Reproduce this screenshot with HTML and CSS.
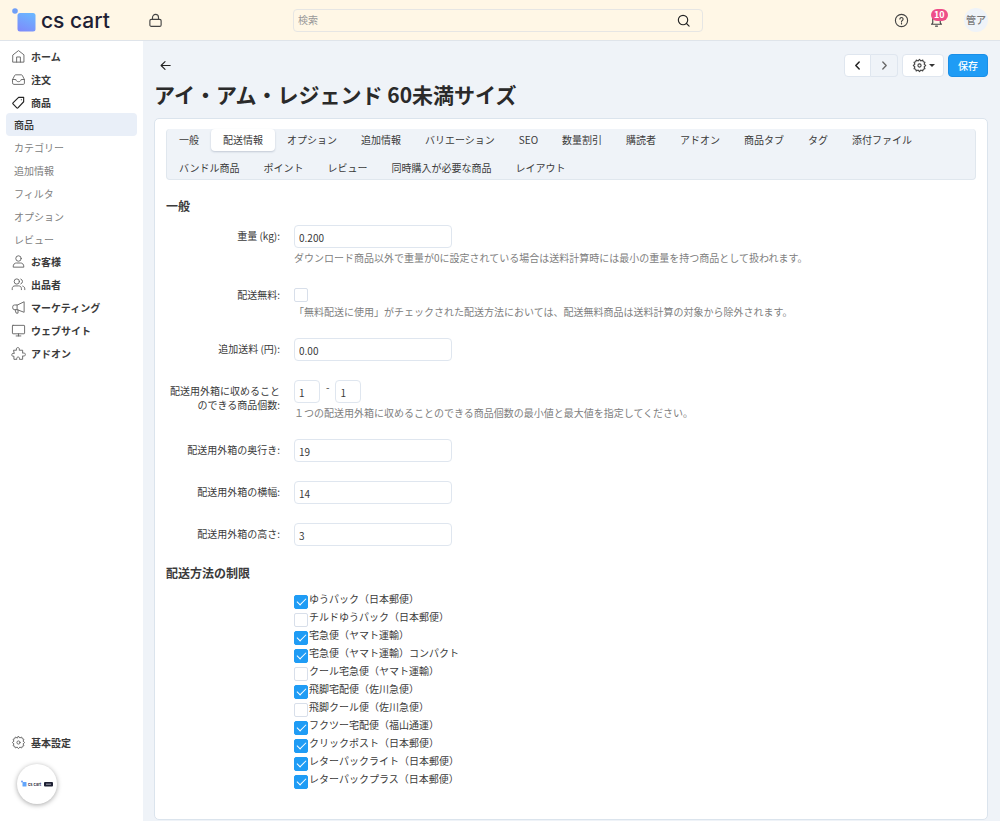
FILE: index.html
```html
<!DOCTYPE html>
<html lang="ja">
<head>
<meta charset="utf-8">
<meta name="viewport" content="width=device-width, initial-scale=1">
<title>アイ・アム・レジェンド 60未満サイズ</title>
<link rel="stylesheet" href="styles.css">
</head>
<body>
<header class="topbar">
  <a class="brand" href="#" aria-label="cs cart">
    <svg class="brand-mark" viewBox="0 0 24 24" aria-hidden="true">
      <defs><linearGradient id="mark" x1="0.7" y1="0" x2="0.3" y2="1"><stop offset="0" stop-color="#6cb6ff"/><stop offset="1" stop-color="#7d8cfb"/></linearGradient></defs>
      <circle cx="3" cy="3" r="2.8" fill="#6f9ff8"/>
      <rect x="5.500" y="5" width="18" height="18.500" rx="2.500" fill="url(#mark)"/>
    </svg>
    <span class="brand-name">cs cart</span>
  </a>
  <button class="icon-button lock" type="button" aria-label="ロック">
    <svg class="icon" viewBox="0 0 16 16"><rect x="2" y="6.800" width="12" height="7.400" rx="1.500"/><path d="M4.800 6.800V4.700a3.200 3.200 0 0 1 6.400 0v2.100"/></svg>
  </button>
  <form class="search" role="search">
    <input class="search-input" type="search" placeholder="検索" aria-label="検索">
    <button class="icon-button" type="button" aria-label="検索する">
      <svg class="icon dark" viewBox="0 0 16 16"><circle cx="7.500" cy="7.500" r="5"/><path d="M11.200 11.200 14 14"/></svg>
    </button>
  </form>
  <div class="top-actions">
    <button class="icon-button" type="button" aria-label="ヘルプ">
      <svg class="icon" viewBox="0 0 16 16"><circle cx="8" cy="8" r="6.500"/><path d="M6.300 6.500a1.700 1.700 0 1 1 2.600 1.400c-.6.400-.9.700-.9 1.300M8 10.700v.9"/></svg>
    </button>
    <button class="icon-button bell" type="button" aria-label="通知">
      <svg class="icon" viewBox="0 0 16 16"><path d="M4 10.500V6.500a4 4 0 0 1 8 0v4l1.300 1.500H2.700zM7 14h2"/></svg>
      <span class="badge">10</span>
    </button>
    <button class="avatar" type="button">管ア</button>
  </div>
</header>

<div class="shell">
  <nav class="sidebar" aria-label="メイン">
    <ul class="menu">
      <li><a class="menu-link" href="#"><svg class="icon muted" viewBox="0 0 16 16"><path d="M2.200 6.200 8 1.700l5.800 4.500V14H2.200z"/><path d="M6 14V8.500h4V14"/></svg>ホーム</a></li>
      <li><a class="menu-link" href="#"><svg class="icon muted" viewBox="0 0 16 16"><path d="M1.700 8 4 3.500Q4.300 3 5 3h6q.7 0 1 .5L14.300 8v4a1.200 1.200 0 0 1-1.200 1.200H2.900A1.200 1.200 0 0 1 1.700 12zM1.700 8h3.500c.4 1.700 1.300 2.300 2.800 2.300s2.400-.6 2.800-2.300h3.500"/></svg>注文</a></li>
      <li>
        <a class="menu-link" href="#"><svg class="icon dark" viewBox="0 0 16 16"><path d="M13.500 2.500v4.700L7.400 13.800a.8.8 0 0 1-1.200 0L2.100 9.400a.8.8 0 0 1 0-1.100l6-5.800zM11 5h.1"/></svg>商品</a>
        <ul class="submenu">
          <li><a class="submenu-link active" href="#" aria-current="page">商品</a></li>
          <li><a class="submenu-link" href="#">カテゴリー</a></li>
          <li><a class="submenu-link" href="#">追加情報</a></li>
          <li><a class="submenu-link" href="#">フィルタ</a></li>
          <li><a class="submenu-link" href="#">オプション</a></li>
          <li><a class="submenu-link" href="#">レビュー</a></li>
        </ul>
      </li>
      <li><a class="menu-link" href="#"><svg class="icon muted" viewBox="0 0 16 16"><circle cx="8" cy="4.800" r="2.900"/><path d="M2.300 13.600c0-3 1.700-4 3.500-4h4.400c1.800 0 3.500 1 3.500 4z"/></svg>お客様</a></li>
      <li><a class="menu-link" href="#"><svg class="icon muted" viewBox="0 0 16 16"><circle cx="6.200" cy="4.800" r="2.800"/><path d="M1.300 13.500v-1c0-2 1.200-3 3-3h3.800c1.800 0 3 1 3 3v1M10.500 2.200a2.800 2.800 0 0 1 0 5.200M12.500 9.700c1.500.4 2.200 1.500 2.200 3v.8"/></svg>出品者</a></li>
      <li><a class="menu-link" href="#"><svg class="icon muted" viewBox="0 0 16 16"><path d="M14 2.300v10.800L6.500 10.300H3.800a2 2 0 0 1-2-2V7.300a2 2 0 0 1 2-2h2.700zM4.300 10.300 5.500 14h2V10.600M6.500 5.300v5"/></svg>マーケティング</a></li>
      <li><a class="menu-link" href="#"><svg class="icon muted" viewBox="0 0 16 16"><rect x="1.500" y="2.500" width="13" height="9" rx=".6"/><path d="M8 11.500v2.300M5.500 13.800h5"/></svg>ウェブサイト</a></li>
      <li><a class="menu-link" href="#"><svg class="icon muted" viewBox="0 0 16 16"><path d="M3.100 4.500H5.900C5.200 2.600 6.100 1.700 7.300 1.700S9.400 2.600 8.700 4.500h3.700v3.200c2-.7 2.900.2 2.900 1.400s-.9 2.100-2.900 1.400v3.700H8.900c.6-1.700-.3-2.400-1.300-2.400s-1.900.7-1.300 2.400H3.100v-3.400c-1.800.6-2.200-.5-2.200-1.500s.5-1.900 2.200-1.400z"/></svg>アドオン</a></li>
    </ul>
    <div class="sidebar-foot">
      <a class="menu-link" href="#"><svg class="icon muted" viewBox="0 0 16 16"><path d="M8 1.400 9.400 3.100 11.500 2.200 12 4 13.800 4.500 12.900 6.600 14.600 8 12.900 9.400 13.800 11.500 12 12 11.500 13.800 9.400 12.900 8 14.600 6.600 12.900 4.500 13.800 4 12 2.200 11.500 3.100 9.400 1.400 8 3.100 6.600 2.200 4.500 4 4 4.500 2.200 6.600 3.100z"/><circle cx="8" cy="8" r="1.700"/></svg>基本設定</a>
      <button class="float-logo" type="button" aria-label="cs cart">
        <svg viewBox="0 0 32 8" aria-hidden="true"><circle cx="1" cy="1.500" r="1" fill="#6f9ff8"/><rect x="1.500" y="2" width="4" height="4.500" rx=".6" fill="#62a5fb"/><text class="mini-name" x="7" y="5.800">cs cart</text><rect x="23" y="2" width="9" height="4.500" rx="1" fill="#1d2033"/><path d="M25 4.200h5" stroke="#9a9cab" stroke-width="1"/></svg>
      </button>
    </div>
  </nav>

  <main class="content">
    <div class="toolbar">
      <a class="back" href="#" aria-label="戻る"><svg class="icon dark" viewBox="0 0 16 16"><path d="M13 8H3.500M7.500 3.800 3.300 8l4.200 4.200"/></svg></a>
      <div class="actions">
        <div class="pager">
          <button class="button" type="button" aria-label="前へ"><svg class="icon bold" viewBox="0 0 16 16"><path d="M9.800 4.200 6.200 8l3.600 3.800"/></svg></button>
          <button class="button disabled" type="button" aria-label="次へ"><svg class="icon next" viewBox="0 0 16 16"><path d="M6.200 4.200 9.800 8l-3.600 3.800"/></svg></button>
        </div>
        <button class="button gear" type="button" aria-label="ツール">
          <svg class="icon" viewBox="0 0 16 16"><path d="M8 1.400 9.400 3.100 11.500 2.200 12 4 13.800 4.500 12.900 6.600 14.600 8 12.900 9.400 13.800 11.500 12 12 11.500 13.800 9.400 12.900 8 14.600 6.600 12.900 4.500 13.800 4 12 2.200 11.500 3.100 9.400 1.400 8 3.100 6.600 2.200 4.500 4 4 4.500 2.200 6.600 3.100z"/><circle cx="8" cy="8" r="1.700"/></svg>
          <span class="caret"></span>
        </button>
        <button class="button primary" type="button">保存</button>
      </div>
    </div>
    <h1 class="title">アイ・アム・レジェンド 60未満サイズ</h1>

    <section class="card">
      <nav class="tabs" aria-label="商品の設定">
        <a class="tab" href="#">一般</a>
        <a class="tab active" href="#" aria-current="page">配送情報</a>
        <a class="tab" href="#">オプション</a>
        <a class="tab" href="#">追加情報</a>
        <a class="tab" href="#">バリエーション</a>
        <a class="tab" href="#">SEO</a>
        <a class="tab" href="#">数量割引</a>
        <a class="tab" href="#">購読者</a>
        <a class="tab" href="#">アドオン</a>
        <a class="tab" href="#">商品タブ</a>
        <a class="tab" href="#">タグ</a>
        <a class="tab" href="#">添付ファイル</a>
        <a class="tab" href="#">バンドル商品</a>
        <a class="tab" href="#">ポイント</a>
        <a class="tab" href="#">レビュー</a>
        <a class="tab" href="#">同時購入が必要な商品</a>
        <a class="tab" href="#">レイアウト</a>
      </nav>

      <form class="form">
        <h2 class="heading">一般</h2>
        <div class="fields">
          <div class="row">
            <label class="label" for="weight">重量 (kg):</label>
            <div><input class="text" id="weight" type="text" value="0.200"><p class="help">ダウンロード商品以外で重量が0に設定されている場合は送料計算時には最小の重量を持つ商品として扱われます。</p></div>
          </div>
          <div class="row">
            <label class="label" for="free">配送無料:</label>
            <div><input class="check lone" id="free" type="checkbox"><p class="help">「無料配送に使用」がチェックされた配送方法においては、配送無料商品は送料計算の対象から除外されます。</p></div>
          </div>
          <div class="row">
            <label class="label" for="freight">追加送料 (円):</label>
            <div><input class="text" id="freight" type="text" value="0.00"></div>
          </div>
          <div class="row">
            <label class="label" for="min-items">配送用外箱に収めることのできる商品個数:</label>
            <div>
              <div class="range"><input class="text small" id="min-items" type="text" value="1"><span>-</span><input class="text small" type="text" value="1" aria-label="最大商品個数"></div>
              <p class="help">１つの配送用外箱に収めることのできる商品個数の最小値と最大値を指定してください。</p>
            </div>
          </div>
          <div class="row">
            <label class="label" for="depth">配送用外箱の奥行き:</label>
            <div><input class="text" id="depth" type="text" value="19"></div>
          </div>
          <div class="row">
            <label class="label" for="width">配送用外箱の横幅:</label>
            <div><input class="text" id="width" type="text" value="14"></div>
          </div>
          <div class="row">
            <label class="label" for="height">配送用外箱の高さ:</label>
            <div><input class="text" id="height" type="text" value="3"></div>
          </div>
        </div>

        <h2 class="heading">配送方法の制限</h2>
        <div class="methods">
          <label class="method"><input class="check" type="checkbox" checked>ゆうパック（日本郵便）</label>
          <label class="method"><input class="check" type="checkbox">チルドゆうパック（日本郵便）</label>
          <label class="method"><input class="check" type="checkbox" checked>宅急便（ヤマト運輸）</label>
          <label class="method"><input class="check" type="checkbox" checked>宅急便（ヤマト運輸）コンパクト</label>
          <label class="method"><input class="check" type="checkbox">クール宅急便（ヤマト運輸）</label>
          <label class="method"><input class="check" type="checkbox" checked>飛脚宅配便（佐川急便）</label>
          <label class="method"><input class="check" type="checkbox">飛脚クール便（佐川急便）</label>
          <label class="method"><input class="check" type="checkbox" checked>フクツー宅配便（福山通運）</label>
          <label class="method"><input class="check" type="checkbox" checked>クリックポスト（日本郵便）</label>
          <label class="method"><input class="check" type="checkbox" checked>レターパックライト（日本郵便）</label>
          <label class="method"><input class="check" type="checkbox" checked>レターパックプラス（日本郵便）</label>
        </div>
      </form>
    </section>
  </main>
</div>
</body>
</html>
```

FILE: styles.css
```css
* {
  box-sizing: border-box;
}

body {
  margin: 0;
  min-height: 100vh;
  display: flex;
  flex-direction: column;
  background: #eff3f8;
  color: #3a3a3a;
  font-family: "Noto Sans CJK JP", sans-serif;
  font-size: 10px;
  line-height: 14px;
}

button,
input {
  font: inherit;
  color: inherit;
  margin: 0;
}

button {
  padding: 0;
  border: 0;
  background: none;
}

a {
  color: inherit;
  text-decoration: none;
}

ul {
  list-style: none;
  margin: 0;
  padding: 0;
}

.icon {
  display: block;
  width: 15px;
  height: 15px;
  flex: none;
  fill: none;
  stroke: #444;
  stroke-width: 1.2;
  stroke-linecap: round;
  stroke-linejoin: round;
}

.icon.muted {
  stroke: #666;
  stroke-width: 1;
}

.icon.dark {
  stroke: #222;
}

.icon.bold {
  stroke: #222;
  stroke-width: 1.6;
}

.icon.next {
  stroke: #666;
  stroke-width: 1.4;
}

/* Top bar */

.topbar {
  display: grid;
  grid-template-columns: 136px 145px 42% 1fr;
  align-items: center;
  height: 41px;
  padding: 0 12px;
  background: #fff7e6;
  border-bottom: 1px solid #dfe4ea;
}

.brand {
  display: flex;
  align-items: center;
  gap: 5px;
}

.brand-mark {
  width: 24px;
  height: 24px;
}

.brand-name {
  padding-top: 1px;
  color: #1d2033;
  font-family: Inter, sans-serif;
  font-size: 21px;
  font-weight: 500;
  line-height: 24px;
}

.search {
  display: flex;
  align-items: center;
  height: 23px;
  padding: 0 11px 0 4px;
  border: 1px solid #e6e6e4;
  border-radius: 4px;
}

.search-input {
  flex: 1;
  min-width: 0;
  padding: 0;
  border: 0;
  outline: 0;
  background: none;
}

.search-input::placeholder {
  color: #999;
}

.top-actions {
  display: flex;
  align-items: center;
  justify-content: flex-end;
  gap: 20px;
}

.bell {
  position: relative;
}

.badge {
  position: absolute;
  left: 2px;
  top: -4px;
  padding: 0 3px;
  border-radius: 6px;
  background: #ee4d88;
  color: #fff;
  font-size: 9px;
  font-weight: 700;
  line-height: 12px;
}

.avatar {
  width: 24px;
  height: 24px;
  border-radius: 50%;
  background: #eff3f8;
  color: #777;
  font-weight: 500;
  white-space: nowrap;
}

/* Shell */

.shell {
  flex: 1;
  display: grid;
  grid-template-columns: 143px minmax(0, 1fr);
}

.sidebar {
  display: flex;
  flex-direction: column;
  justify-content: space-between;
  padding: 4px 6px 17px;
  background: #fff;
}

.menu-link {
  display: flex;
  align-items: center;
  gap: 5px;
  height: 23px;
  padding-left: 5px;
  font-weight: 700;
}

.submenu {
  margin: -1px 0;
}

.submenu-link {
  display: block;
  padding-left: 8px;
  border-radius: 4px;
  color: #808080;
  line-height: 23px;
}

.submenu-link.active {
  background: #e9eff8;
  color: #333;
  font-weight: 500;
}

.sidebar-foot {
  display: grid;
  gap: 10px;
}

.float-logo {
  display: grid;
  place-items: center;
  width: 40px;
  height: 40px;
  margin-left: 11px;
  border-radius: 50%;
  background: #fff;
  box-shadow: 0 1px 5px rgba(0, 0, 0, 0.35);
}

.float-logo svg {
  width: 32px;
  height: 8px;
}

.mini-name {
  font-family: Inter, sans-serif;
  font-size: 4px;
  font-weight: 600;
  fill: #1d2033;
}

.content {
  display: flex;
  flex-direction: column;
  padding: 13px 12px 1px 11px;
}

.toolbar {
  display: flex;
  align-items: center;
  justify-content: space-between;
  padding-left: 4px;
}

.actions,
.pager {
  display: flex;
}

.actions {
  gap: 4px;
}

.button {
  display: flex;
  align-items: center;
  justify-content: center;
  height: 23px;
  min-width: 27px;
  border: 1px solid #dfe6ef;
  border-radius: 4px;
  background: #fff;
}

.pager .button:first-child {
  border-radius: 4px 0 0 4px;
}

.pager .button:last-child {
  border-left: 0;
  border-radius: 0 4px 4px 0;
}

.button.disabled {
  background: #eff3f8;
}

.button.gear {
  gap: 2px;
  width: 42px;
}

.caret {
  border: 3px solid transparent;
  border-top-color: #333;
  border-bottom: 0;
}

.button.primary {
  width: 40px;
  border-color: #1a8fe8;
  background: #1f9cf5;
  color: #fff;
  font-weight: 500;
}

.title {
  margin: 3px 0 9px;
  font-size: 21px;
  font-weight: 700;
  line-height: 29px;
  color: #2a2a2a;
}

.card {
  flex: 1;
  padding: 10px 11px 24px;
  border: 1px solid #dbe4ed;
  border-radius: 5px;
  background: #fff;
}

.tabs {
  display: flex;
  flex-wrap: wrap;
  row-gap: 6px;
  border: 1px solid #e0e7ee;
  border-top-width: 0;
  border-radius: 4px;
  background: #eff3f8;
}

.tab {
  padding: 0 12px;
  border-radius: 4px;
  line-height: 22px;
}

.tab.active {
  background: #fff;
  box-shadow: 0 1px 2px rgba(60, 80, 110, 0.25);
}

/* Form */

.heading {
  margin: 0;
  font-size: 12px;
  font-weight: 700;
  line-height: 18px;
}

.form {
  padding-top: 17px;
}

.fields {
  display: grid;
  gap: 19px;
  padding: 10px 0 18px;
}

.row {
  display: grid;
  grid-template-columns: 114px minmax(0, 1fr);
  column-gap: 14px;
}

.label {
  padding-top: 4px;
  text-align: right;
}

.text {
  display: block;
  width: 158px;
  height: 23px;
  padding: 1px 4px 0;
  border: 1px solid #dfe6ef;
  border-radius: 4px;
  background: #fff;
}

.text.small {
  width: 26px;
}

.range {
  display: flex;
  gap: 6px;
}

.help {
  margin: 3px 0 0;
  color: #808080;
}

.check {
  appearance: none;
  display: grid;
  place-items: center;
  flex: none;
  width: 14px;
  height: 14px;
  border: 1px solid #d8dfea;
  border-radius: 2px;
  background: #fff;
}

.check:checked {
  border-color: #1f9cf5;
  background: #1f9cf5;
}

.check:checked::after {
  content: "";
  box-sizing: border-box;
  width: 9px;
  height: 5px;
  margin-bottom: 3px;
  border: solid #fff;
  border-width: 0 0 1px 1px;
  transform: rotate(-45deg);
}

.check.lone {
  margin-top: 4px;
}

.methods {
  display: grid;
  justify-items: start;
  padding: 10px 0 0 128px;
}

.method {
  display: flex;
  gap: 1px;
  height: 18px;
}

.method .check {
  margin-top: 3px;
}
```
